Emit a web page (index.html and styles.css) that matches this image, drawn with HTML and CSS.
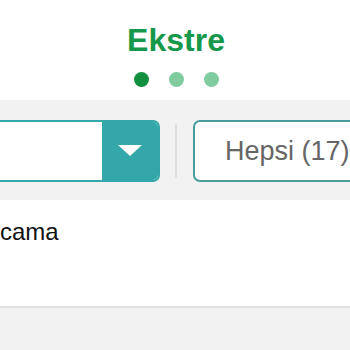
FILE: index.html
```html
<!DOCTYPE html>
<html>
<head>
<meta charset="utf-8">
<link rel="stylesheet" href="styles.css">
</head>
<body>
<div class="header">
  <div class="title">Ekstre</div>
  <div class="dots">
    <span class="dot active"></span>
    <span class="dot"></span>
    <span class="dot"></span>
  </div>
</div>
<div class="filters">
  <div class="select">
    <div class="select-field"></div>
    <div class="select-btn">
      <svg width="24" height="12" viewBox="0 0 24 12"><polygon points="0,0 24,0 12,11" fill="#fff"/></svg>
    </div>
  </div>
  <div class="sep"></div>
  <div class="tab">Hepsi (17)</div>
</div>
<div class="content">
  <div class="row">cama</div>
</div>
<div class="footer"></div>
</body>
</html>
```
FILE: styles.css
```css
html, body {
  margin: 0;
  padding: 0;
  width: 350px;
  height: 350px;
  overflow: hidden;
  background: #fff;
  font-family: "Liberation Sans", Arial, sans-serif;
}
.header {
  height: 100px;
  display: flex;
  flex-direction: column;
  align-items: center;
  padding-top: 22px;
  box-sizing: border-box;
  background: #fff;
}
.title {
  font-size: 32px;
  font-weight: bold;
  color: #16984a;
  line-height: 36px;
  margin-left: 2px;
}
.dots {
  display: flex;
  gap: 20px;
  margin-top: 14px;
  margin-left: 2px;
}
.dot {
  width: 15px;
  height: 15px;
  border-radius: 50%;
  background: #80cc9f;
}
.dot.active {
  background: #13903f;
}
.filters {
  height: 100px;
  background: #f2f2f2;
  display: flex;
  align-items: flex-start;
  padding-top: 20px;
  box-sizing: border-box;
}
.select {
  display: flex;
  flex-shrink: 0;
  height: 62px;
  margin-left: -40px;
  border: 2px solid #33a7a9;
  border-radius: 7px;
  box-sizing: border-box;
  overflow: hidden;
  background: #fff;
}
.select-field {
  width: 140px;
  background: #fff;
}
.select-btn {
  width: 56px;
  background: #33a7a9;
  display: flex;
  align-items: center;
  justify-content: center;
}
.sep {
  flex-shrink: 0;
  width: 2px;
  height: 54px;
  margin: 4px 16px 0 15px;
  background: #dedede;
}
.tab {
  height: 62px;
  width: 200px;
  flex-shrink: 0;
  border: 2px solid #4a9c9c;
  border-radius: 7px;
  background: #fff;
  box-sizing: border-box;
  font-size: 27px;
  color: #666;
  padding-left: 30px;
  line-height: 58px;
  white-space: nowrap;
}
.content {
  height: 106px;
  background: #fff;
}
.row {
  font-size: 24px;
  color: #111;
  padding-top: 18px;
  line-height: 28px;
}
.footer {
  height: 44px;
  border-top: 2px solid #e2e2e2;
  background: #f2f2f2;
}
```
